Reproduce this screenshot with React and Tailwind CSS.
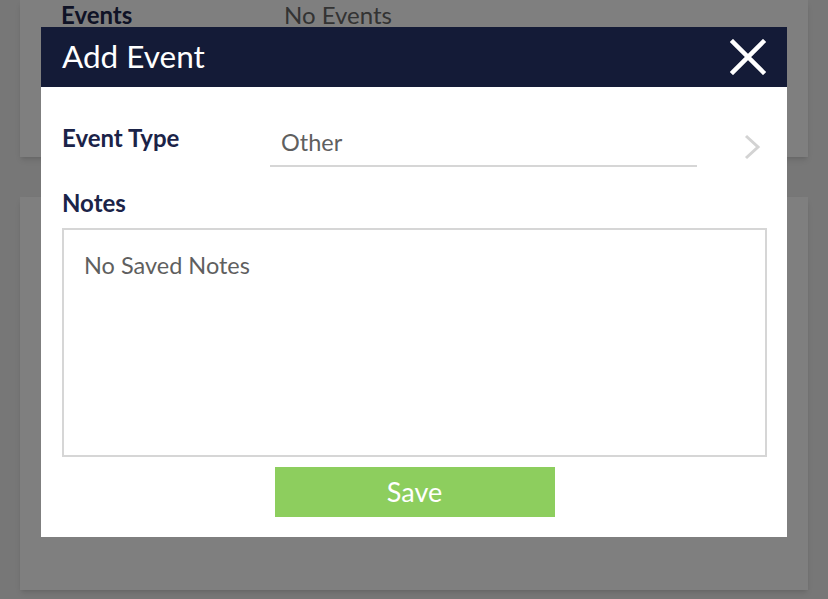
const font = { fontFamily: "Lato, 'Open Sans', sans-serif" };

function CloseIcon() {
  return (
    <svg width="36" height="36" viewBox="0 0 36 36" fill="none">
      <path d="M3 3L33 33M33 3L3 33" stroke="#ffffff" strokeWidth="4.5" strokeLinecap="square" />
    </svg>
  );
}

function Chevron() {
  return (
    <svg width="18" height="26" viewBox="0 0 18 26" fill="none">
      <path d="M3 2L15 13L3 24" stroke="#d3d3d3" strokeWidth="3" />
    </svg>
  );
}

export default function App() {
  return (
    <div className="relative min-h-screen bg-[#eeeeee] px-5 font-['Lato',sans-serif]">
      <div className="h-[157px] bg-white shadow-md">
        <div className="flex pl-[41px] text-[24px] leading-[30px]">
          <span className="w-[223px] font-bold text-[#1e264c]">Events</span>
          <span className="text-[#666666]">No Events</span>
        </div>
      </div>
      <div className="mt-10 h-[393px] bg-white shadow-md" />

      <div className="fixed inset-0 flex justify-center bg-black/50 pt-[27px]">
        <div className="h-[510px] w-[746px] bg-white">
          <div className="flex h-[60px] items-center justify-between bg-[#141b37] pl-[21px] pr-[21px]">
            <h2 className="text-[31.5px] font-normal text-white">Add Event</h2>
            <CloseIcon />
          </div>
          <div className="pl-[21px] pr-[20px] pb-5">
            <div className="mt-[28px] flex h-[52px]">
              <div className="w-[208px] text-[24px] font-bold leading-[46px] text-[#1b2348]">Event Type</div>
              <div className="flex h-[52px] w-[427px] items-center border-b-2 border-[#d6d6d6] pl-[11px] pt-[6px] text-[23.5px] text-[#5f5f5f]">
                Other
              </div>
              <div className="flex flex-1 items-center justify-end pr-[6px] pt-[12px]">
                <Chevron />
              </div>
            </div>
            <div className="mt-[21px] text-[24px] font-bold leading-[30px] text-[#1b2348]">Notes</div>
            <div className="mt-[10px] h-[229px] border-2 border-[#d6d6d6] pl-5 pt-5 text-[23.5px] leading-[30px] text-[#5f5f5f]">
              No Saved Notes
            </div>
            <div className="mt-[10px] flex justify-center">
              <button type="button" className="h-[50px] w-[280px] bg-[#8dce5e] text-[27px] text-white">Save</button>
            </div>
          </div>
        </div>
      </div>
    </div>
  );
}
